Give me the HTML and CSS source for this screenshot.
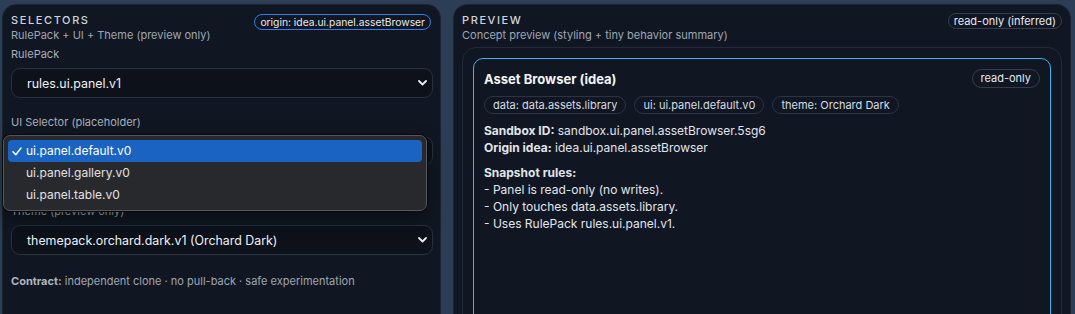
FILE: index.html
```html
<!doctype html>
<html lang="en">
 <head>
  <meta charset="UTF-8">
  <meta name="viewport" content="width=device-width, initial-scale=1.0">
  <title>Sandbox preview</title>
  <link rel="stylesheet" href="styles.css">
 </head>
 <body>
  <div class="layout">
   <section class="panel">
    <div class="panel-head">
     <div>
      <h2 class="panel-title">Selectors</h2>
      <p class="panel-sub">RulePack + UI + Theme (preview only)</p>
     </div>
     <span class="pill pill-origin">origin: idea.ui.panel.assetBrowser</span>
    </div>

    <div class="field">
     <label>RulePack</label>
     <div class="select">
      <span>rules.ui.panel.v1</span>
      <svg class="chev" width="9" height="6" viewBox="0 0 9 6"><path d="M1 1l3.5 3.5L8 1" fill="none" stroke="#e8ecf1" stroke-width="1.8" stroke-linecap="round" stroke-linejoin="round"/></svg>
     </div>
    </div>

    <div class="field field-open">
     <label>UI Selector (placeholder)</label>
     <div class="select">
      <span>ui.panel.default.v0</span>
      <svg class="chev" width="9" height="6" viewBox="0 0 9 6"><path d="M1 1l3.5 3.5L8 1" fill="none" stroke="#e8ecf1" stroke-width="1.8" stroke-linecap="round" stroke-linejoin="round"/></svg>
     </div>
     <ul class="menu">
      <li class="menu-item active">
       <svg class="check" width="10" height="9" viewBox="0 0 10 9"><path d="M1 4.8l2.8 3L9 1" fill="none" stroke="#fff" stroke-width="1.5" stroke-linecap="round" stroke-linejoin="round"/></svg>
       ui.panel.default.v0
      </li>
      <li class="menu-item">ui.panel.gallery.v0</li>
      <li class="menu-item">ui.panel.table.v0</li>
     </ul>
    </div>

    <div class="field">
     <label>Theme (preview only)</label>
     <div class="select">
      <span>themepack.orchard.dark.v1 (Orchard Dark)</span>
      <svg class="chev" width="9" height="6" viewBox="0 0 9 6"><path d="M1 1l3.5 3.5L8 1" fill="none" stroke="#e8ecf1" stroke-width="1.8" stroke-linecap="round" stroke-linejoin="round"/></svg>
     </div>
    </div>

    <p class="contract"><b>Contract:</b> independent clone · no pull-back · safe experimentation</p>
   </section>

   <section class="panel">
    <div class="panel-head">
     <div>
      <h2 class="panel-title">Preview</h2>
      <p class="panel-sub">Concept preview (styling + tiny behavior summary)</p>
     </div>
     <span class="pill">read-only (inferred)</span>
    </div>

    <div class="frame">
     <div class="card">
      <div class="card-head">
       <h3 class="card-title">Asset Browser (idea)</h3>
       <span class="pill pill-lg">read-only</span>
      </div>
      <div class="chips">
       <span class="chip">data: data.assets.library</span>
       <span class="chip">ui: ui.panel.default.v0</span>
       <span class="chip">theme: Orchard Dark</span>
      </div>
      <div class="meta">
       <div><b>Sandbox ID:</b> sandbox.ui.panel.assetBrowser.5sg6</div>
       <div><b>Origin idea:</b> idea.ui.panel.assetBrowser</div>
      </div>
      <div class="rules">
       <div><b>Snapshot rules:</b></div>
       <div>- Panel is read-only (no writes).</div>
       <div>- Only touches data.assets.library.</div>
       <div>- Uses RulePack rules.ui.panel.v1.</div>
      </div>
     </div>
    </div>
   </section>
  </div>
 </body>
</html>
```

FILE: styles.css
```css
body {
    margin: 0;
    background: #2c3e55;
    font-family: 'Inter', 'Noto Sans', sans-serif;
    color: #e3e7ec;
    overflow: hidden;
}

.layout {
    display: grid;
    grid-template-columns: 439px 1fr;
    gap: 12px;
    padding: 4px 4px 0 2px;
}

.panel {
    background: #111722;
    border: 1px solid #1d2431;
    border-radius: 14px;
    padding: 8px 8px 0 8px;
    min-height: 340px;
}

.panel-head {
    display: flex;
    justify-content: space-between;
    align-items: flex-start;
}

.panel-title {
    margin: 0;
    font-size: 11px;
    line-height: 15px;
    font-weight: 500;
    letter-spacing: 1.6px;
    text-transform: uppercase;
    color: #cfd4db;
}

.panel-sub {
    margin: 0;
    font-size: 11px;
    line-height: 15px;
    color: #9ea6b1;
}

.pill {
    display: inline-block;
    font-size: 11px;
    line-height: 14px;
    padding: 0 5px;
    border: 1px solid #353d4b;
    border-radius: 10px;
    color: #e6e9ee;
    white-space: nowrap;
}

.pill-origin {
    font-size: 10.3px;
    border-color: #2f7fe8;
    margin-top: 1px;
    margin-right: 1px;
    padding: 0 5px;
}

.pill-lg {
    line-height: 17px;
    padding: 0 8px;
}

/* selectors */

.field {
    position: relative;
    margin-top: 4px;
}

.field + .field {
    margin-top: 17px;
}

.field-open {
    padding-bottom: 21px;
}

.field label {
    display: block;
    font-size: 11px;
    line-height: 15px;
    color: #a7afba;
    margin-bottom: 6px;
}

.select {
    display: flex;
    align-items: center;
    justify-content: space-between;
    height: 30px;
    box-sizing: border-box;
    margin-right: -1px;
    padding: 0 5px 0 15px;
    background: #0c111a;
    border: 1px solid #283041;
    border-radius: 9px;
    font-size: 12.4px;
    color: #eef1f5;
}

.menu {
    position: absolute;
    left: -8px;
    top: 20px;
    width: 424px;
    box-sizing: border-box;
    margin: 0;
    padding: 4px 4px;
    list-style: none;
    background: #28292c;
    border: 1px solid #56575b;
    border-radius: 7px;
    box-shadow: 0 0 0 1px #0a0a0c, 0 8px 20px rgba(0, 0, 0, 0.45);
    z-index: 10;
}

.menu-item {
    position: relative;
    height: 22px;
    line-height: 22px;
    padding-left: 18px;
    font-size: 12px;
    color: #e2e2e4;
    border-radius: 4px;
}

.menu-item.active {
    background: #1b63c3;
    color: #fff;
}

.check {
    position: absolute;
    left: 4px;
    top: 7px;
}

.contract {
    margin: 19px 0 0;
    font-size: 11px;
    line-height: 15px;
    color: #9ea6b1;
}

.contract b {
    color: #aeb5bf;
}

/* preview */

.frame {
    margin-top: 4px;
    border: 1px solid #222a37;
    border-radius: 14px;
    padding: 10px;
}

.card {
    border: 1px solid #3ab6ee;
    border-radius: 10px;
    padding: 10px;
    min-height: 260px;
}

.card-head {
    display: flex;
    justify-content: space-between;
    align-items: center;
}

.card-title {
    margin: 0;
    font-size: 13px;
    font-weight: 700;
    color: #f1f3f6;
}

.chips {
    display: flex;
    gap: 8px;
    margin-top: 8px;
}

.chip {
    font-size: 11px;
    line-height: 16px;
    padding: 0 8px;
    border: 1px solid #2c3443;
    border-radius: 10px;
    color: #d7dce3;
}

.meta,
.rules {
    font-size: 12px;
    line-height: 17px;
    color: #e1e5ea;
}

.meta {
    margin-top: 8px;
}

.rules {
    margin-top: 8px;
}
```
